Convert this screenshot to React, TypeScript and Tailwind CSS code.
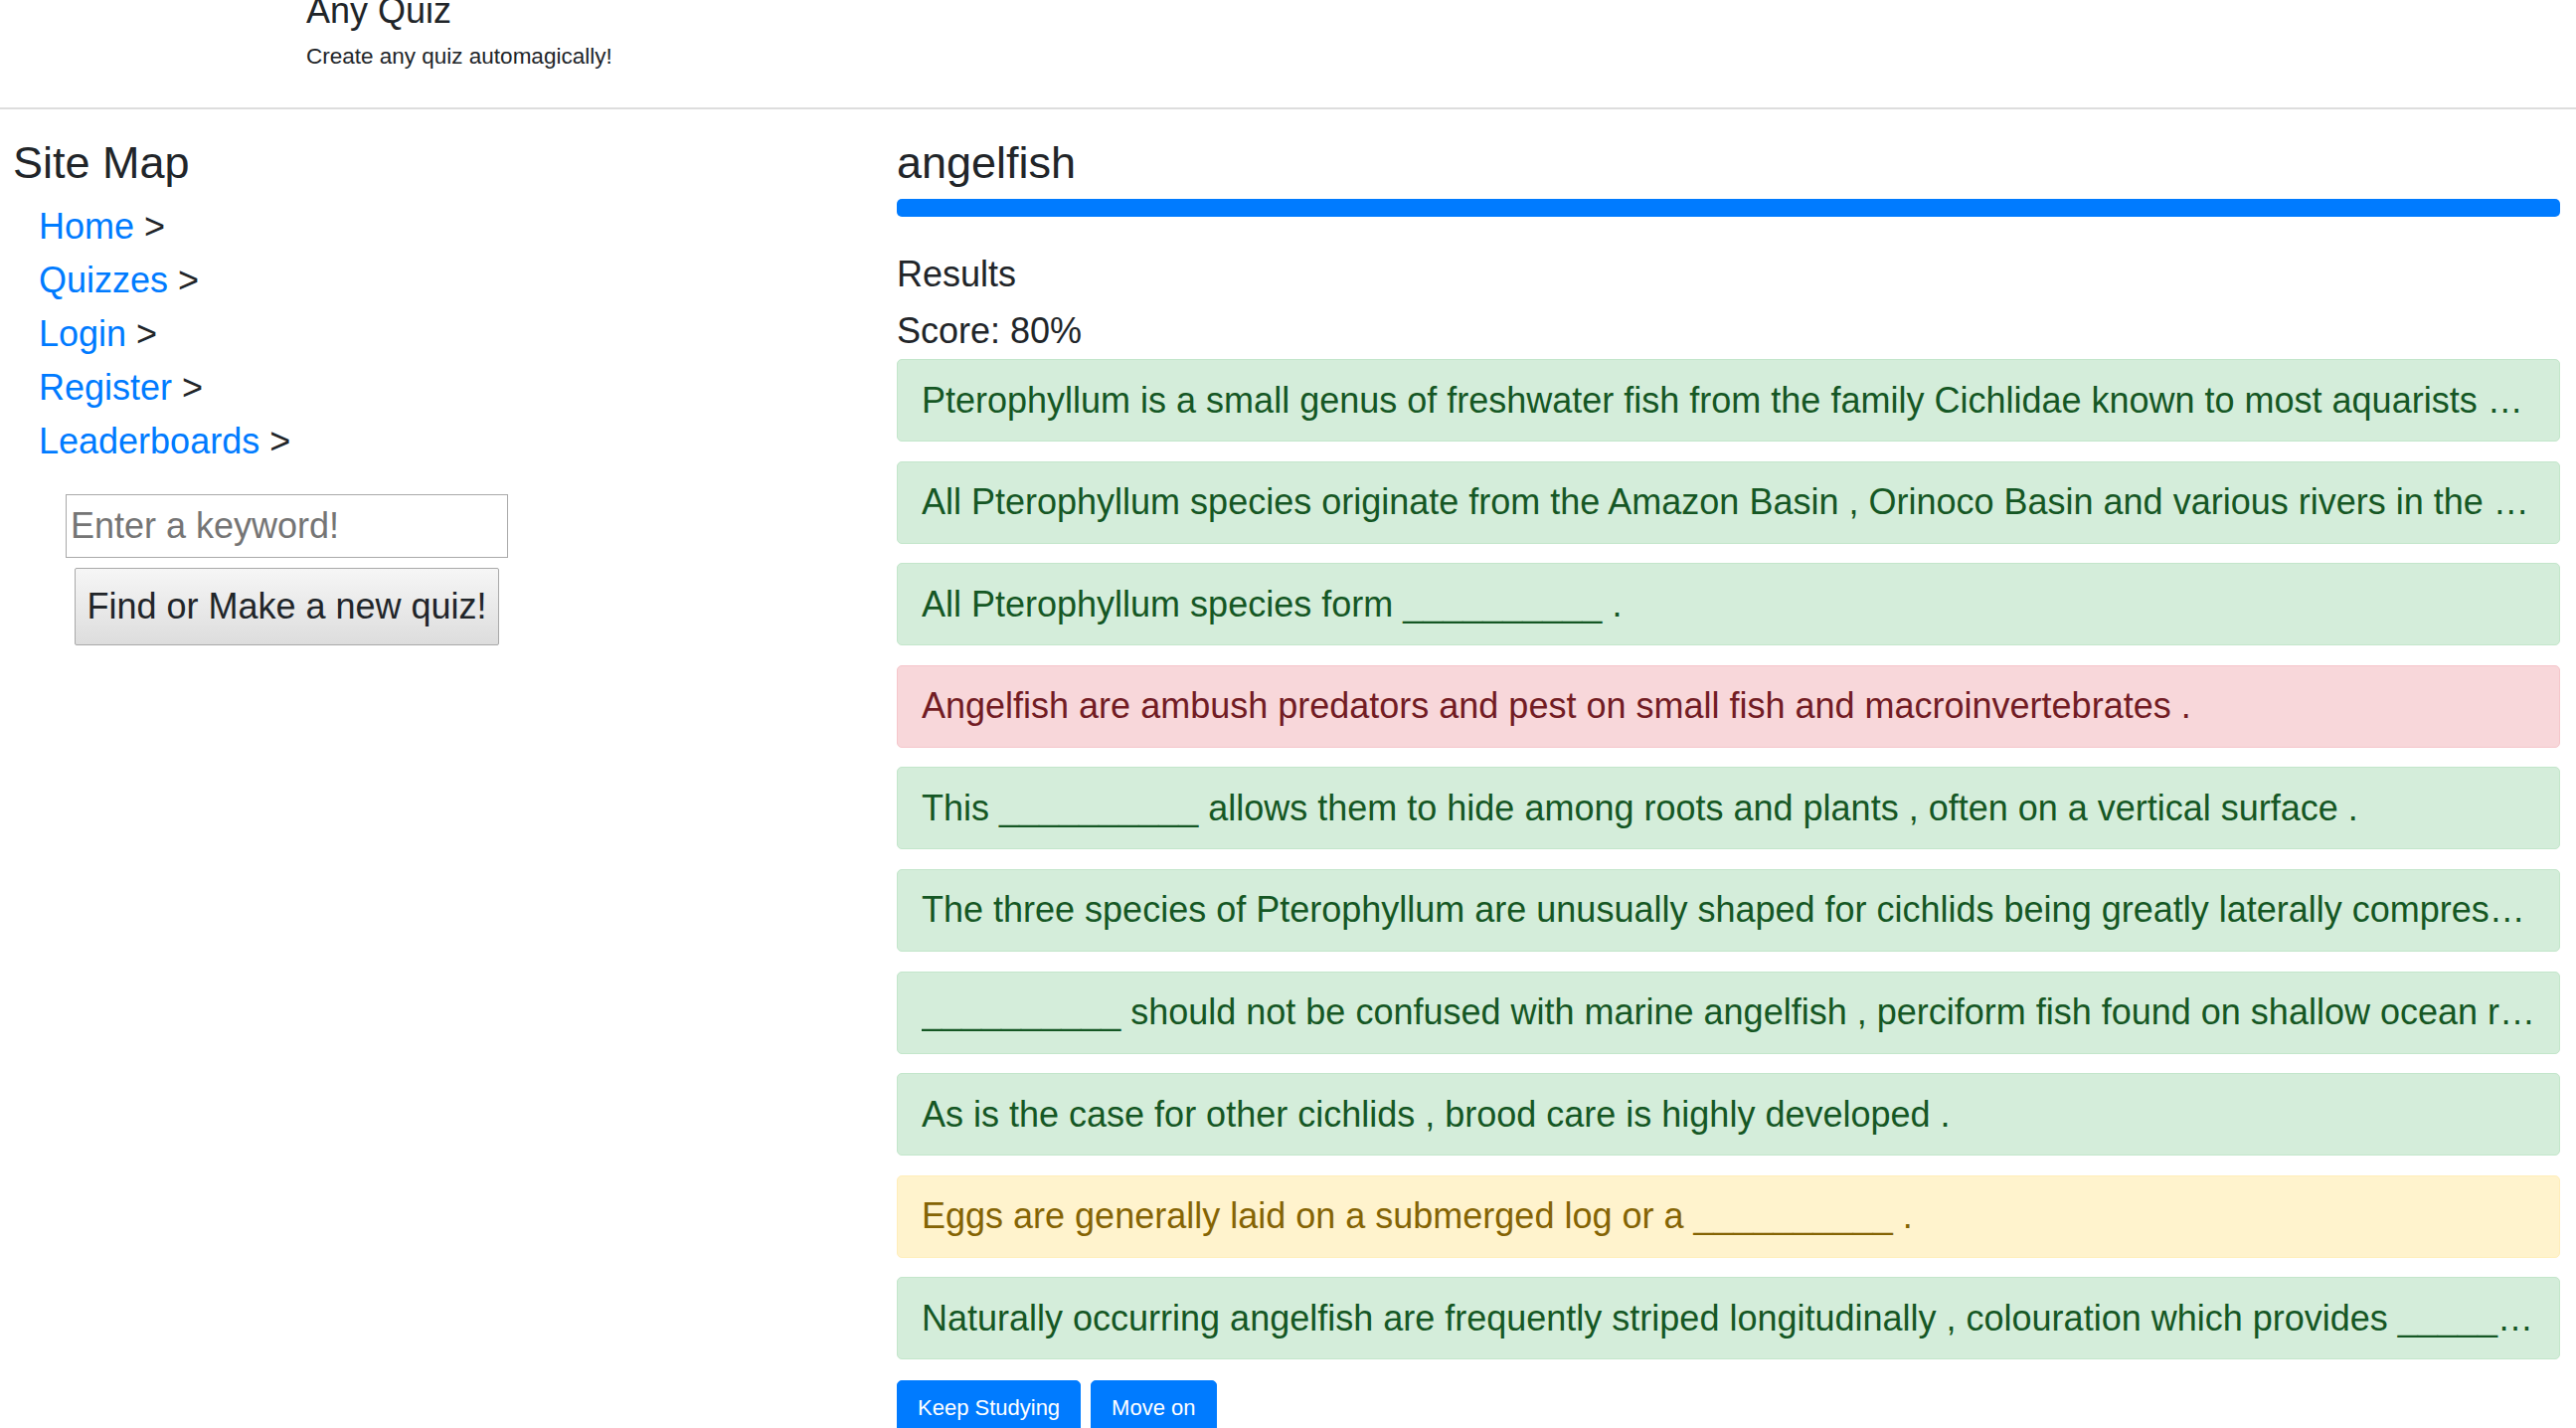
import React from 'react';

type Verdict = 'right' | 'wrong' | 'close';

interface ResultRow {
  text: string;
  verdict: Verdict;
}

const BLANK = '__________';

const results: ResultRow[] = [
  { text: 'Pterophyllum is a small genus of freshwater fish from the family Cichlidae known to most aquarists as angelfish .', verdict: 'right' },
  { text: 'All Pterophyllum species originate from the Amazon Basin , Orinoco Basin and various rivers in the Guiana Shield in tropical South America .', verdict: 'right' },
  { text: `All Pterophyllum species form ${BLANK} .`, verdict: 'right' },
  { text: 'Angelfish are ambush predators and pest on small fish and macroinvertebrates .', verdict: 'wrong' },
  { text: `This ${BLANK} allows them to hide among roots and plants , often on a vertical surface .`, verdict: 'right' },
  { text: 'The three species of Pterophyllum are unusually shaped for cichlids being greatly laterally compressed , with round bodies and elongated triangular dorsal and anal fins .', verdict: 'right' },
  { text: `${BLANK} should not be confused with marine angelfish , perciform fish found on shallow ocean reefs .`, verdict: 'right' },
  { text: 'As is the case for other cichlids , brood care is highly developed .', verdict: 'right' },
  { text: `Eggs are generally laid on a submerged log or a ${BLANK} .`, verdict: 'close' },
  { text: `Naturally occurring angelfish are frequently striped longitudinally , colouration which provides ${BLANK} camouflage .`, verdict: 'right' },
];

const verdictStyles: Record<Verdict, string> = {
  right: 'bg-[#d4edda] border-[#c3e6cb] text-[#155724]',
  wrong: 'bg-[#f8d7da] border-[#f5c6cb] text-[#721c24]',
  close: 'bg-[#fff3cd] border-[#ffeeba] text-[#856404]',
};

const links = ['Home', 'Quizzes', 'Login', 'Register', 'Leaderboards'];

const Sidebar: React.FC = () => (
  <aside className="w-[889px] shrink-0 pl-[13px] pt-[27px]">
    <h5 className="text-[45px] leading-[53px]">Site Map</h5>
    <ul className="mt-[11px] pl-[26px]">
      {links.map((l) => (
        <li key={l} className="text-[36px] leading-[54px]">
          <a href="#" className="text-[#007bff]">{l}</a> &gt;
        </li>
      ))}
    </ul>
    <div className="mt-[26px] flex flex-col">
      <input
        type="text"
        placeholder="Enter a keyword!"
        className="ml-[53px] h-[64px] w-[445px] border border-[#a9a9a9] bg-white px-[4px] text-[36px] placeholder:text-[#757575] outline-none"
      />
      <button className="ml-[62px] mt-[10px] h-[78px] w-[427px] rounded-[2px] border border-[#a9a9a9] bg-gradient-to-b from-[#f6f6f6] to-[#dddddd] text-[36px] text-[#212529]">
        Find or Make a new quiz!
      </button>
    </div>
  </aside>
);

export default function App() {
  return (
    <div className="min-h-screen overflow-hidden bg-white font-['Liberation_Sans',Arial,sans-serif] text-[#212529]">
      <header className="-mt-[10px] border-b-2 border-[#dddddd] pb-[35px] pl-[308px]">
        <div className="text-[36px] leading-[42px]">Any Quiz</div>
        <div className="mt-[8px] text-[22.5px] leading-[33px]">Create any quiz automagically!</div>
      </header>

      <div className="flex">
        <Sidebar />

        <main className="min-w-0 flex-1 pl-[13px] pr-[16px] pt-[27px]">
          <h5 className="text-[45px] leading-[53px]">angelfish</h5>
          <div className="mt-[10px] h-[18px] w-full overflow-hidden rounded-[5px] bg-[#e9ecef]">
            <div className="h-full bg-[#007bff]" style={{ width: '100%' }} />
          </div>

          <div className="mt-[30px] text-[36px] leading-[56px]">Results</div>
          <div className="mt-[1px] text-[36px] leading-[56px]">Score: 80%</div>

          <div className="flex flex-col gap-[19.6px]">
            {results.map((r, i) => (
              <div
                key={i}
                className={`flex h-[83px] items-center rounded-[5px] border pl-[24px] pr-[20px] ${verdictStyles[r.verdict]}`}
              >
                <span className="block min-w-0 flex-1 overflow-hidden text-ellipsis whitespace-nowrap text-[36px] leading-[56px]">
                  {r.text}
                </span>
              </div>
            ))}
          </div>

          <div className="mt-[21px] flex gap-[10px]">
            <button className="h-[55px] rounded-[5px] border border-[#007bff] bg-[#007bff] px-[20px] text-[22px] text-white">
              Keep Studying
            </button>
            <button className="h-[55px] rounded-[5px] border border-[#007bff] bg-[#007bff] px-[20px] text-[22px] text-white">
              Move on
            </button>
          </div>
        </main>
      </div>
    </div>
  );
}
